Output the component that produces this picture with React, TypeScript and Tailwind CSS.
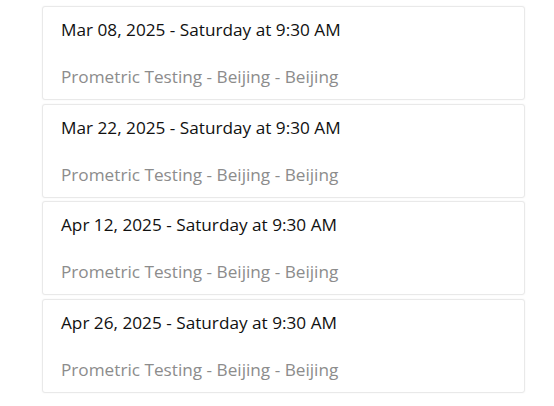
const sessions = [
  { date: 'Mar 08, 2025', day: 'Saturday', time: '9:30 AM' },
  { date: 'Mar 22, 2025', day: 'Saturday', time: '9:30 AM' },
  { date: 'Apr 12, 2025', day: 'Saturday', time: '9:30 AM' },
  { date: 'Apr 26, 2025', day: 'Saturday', time: '9:30 AM' },
];

export default function App() {
  return (
    <div className="min-h-[406px] w-[554px] bg-white pl-[42px] pt-[6px] font-['Open_Sans',sans-serif]">
      <div className="flex w-[483px] flex-col gap-[3.5px]">
        {sessions.map((s) => (
          <div
            key={s.date}
            className="h-[94px] rounded-[3px] border border-[#e9e9e9] bg-white pl-[18px] pt-[11px] shadow-[0_0_2px_rgba(0,0,0,0.06)]"
          >
            <div className="text-[17.2px] leading-6 text-[#111]">
              {s.date} - {s.day} at {s.time}
            </div>
            <div className="mt-[23px] text-[17.2px] leading-6 text-[#8c8c8c]">
              Prometric Testing - Beijing - Beijing
            </div>
          </div>
        ))}
      </div>
    </div>
  );
}
